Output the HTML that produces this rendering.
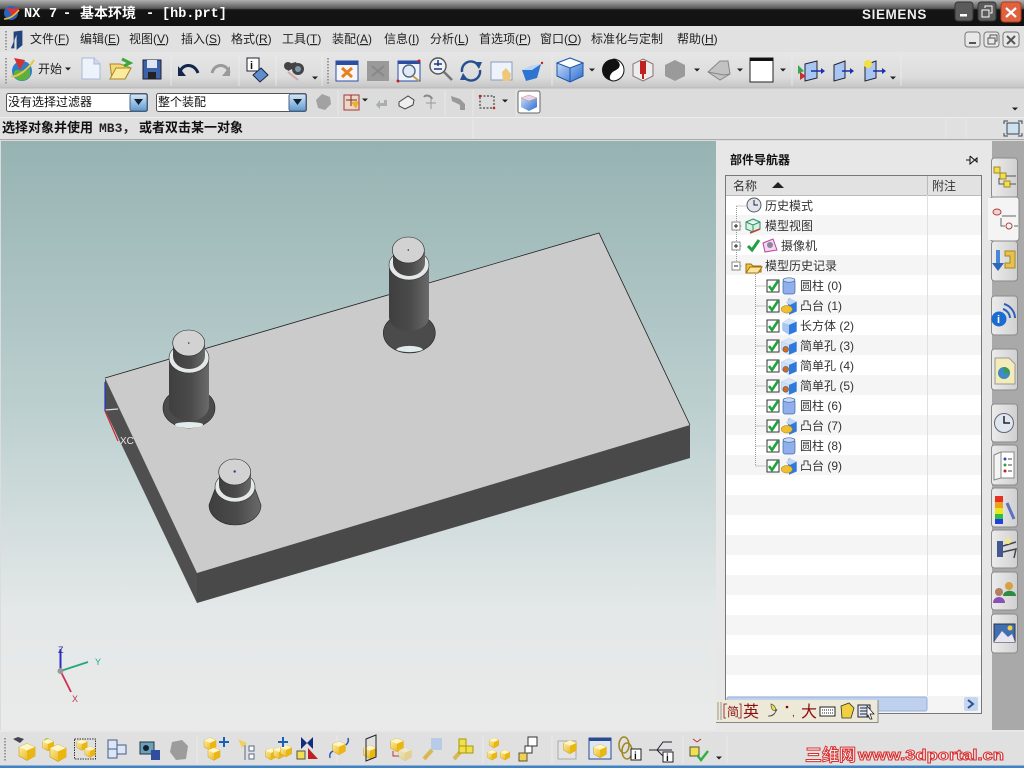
<!DOCTYPE html>
<html><head><meta charset="utf-8"><style>
html,body{margin:0;padding:0;width:1024px;height:768px;overflow:hidden;background:#ddd}
svg{display:block;filter:blur(.3px)}
text{font-family:"Liberation Sans","Noto Sans CJK SC",sans-serif;font-size:12px;fill:#222}
.t{font-size:12px;fill:#333}
.b{font-family:"Liberation Mono","Noto Sans CJK SC",monospace;font-weight:bold;font-size:13.5px;fill:#fff}
.s{font-family:"Liberation Mono","Noto Sans CJK SC",monospace;font-weight:bold;font-size:13px;fill:#111}
.tree{stroke:#999;stroke-dasharray:1 1;fill:none}
.sep{stroke:#eeeeee;stroke-opacity:.75}
.wm{font-weight:bold;fill:#fff;stroke:#d83030;stroke-width:1}
</style></head><body>
<svg width="1024" height="768" viewBox="0 0 1024 768" xmlns="http://www.w3.org/2000/svg">
<defs>
<linearGradient id="tb" x1="0" y1="0" x2="0" y2="1"><stop offset="0" stop-color="#b0b0b0"/><stop offset=".32" stop-color="#5a5a5a"/><stop offset=".38" stop-color="#151515"/><stop offset="1" stop-color="#111"/></linearGradient>
<linearGradient id="vp" x1="0" y1="0" x2="0" y2="1"><stop offset="0" stop-color="#96b3b2"/><stop offset=".45" stop-color="#bccfcf"/><stop offset=".8" stop-color="#e4e8e8"/><stop offset="1" stop-color="#eaeaea"/></linearGradient>
<linearGradient id="bar" x1="0" y1="0" x2="0" y2="1"><stop offset="0" stop-color="#e6e6e6"/><stop offset=".7" stop-color="#dcdcdc"/><stop offset="1" stop-color="#c4c4c4"/></linearGradient>
<linearGradient id="cyl" x1="0" y1="0" x2="1" y2="0"><stop offset="0" stop-color="#3f3f3f"/><stop offset=".55" stop-color="#4b4b4b"/><stop offset="1" stop-color="#6a6a6a"/></linearGradient>
<linearGradient id="bl" x1="0" y1="0" x2="1" y2="1"><stop offset="0" stop-color="#d5e6fb"/><stop offset="1" stop-color="#2a6bd0"/></linearGradient>
<linearGradient id="yl" x1="0" y1="0" x2="1" y2="1"><stop offset="0" stop-color="#fff4b0"/><stop offset="1" stop-color="#e3a800"/></linearGradient>
<linearGradient id="combo" x1="0" y1="0" x2="0" y2="1"><stop offset="0" stop-color="#dbe8f6"/><stop offset="1" stop-color="#5e9ad2"/></linearGradient>
<linearGradient id="tab" x1="0" y1="0" x2="1" y2="0"><stop offset="0" stop-color="#ececec"/><stop offset="1" stop-color="#d0d0d0"/></linearGradient>

<g id="yc"><path d="M0-8.500 8-5V4L0 8.500-8 4V-5Z" fill="url(#yl)" stroke="#c79a20" stroke-width=".6"/><path d="M-8-5 0-1.500 8-5 0-8.500Z" fill="#fff6c8"/><path d="M0-1.500V8.500L8 4V-5Z" fill="#eab60f"/></g>
<g id="bc"><path d="M0-12 13-7V6L0 12-13 6V-7Z" fill="url(#bl)" stroke="#1d56a8"/><path d="M-13-7 0-2 13-7 0-12Z" fill="#fff" stroke="#1d56a8"/><path d="M0-2V12" stroke="#1d56a8" fill="none"/></g>
<g id="chk"><rect x="-6" y="-6" width="12" height="12" fill="#fff" stroke="#333"/><path d="M-4 0-1 4 5-5" fill="none" stroke="#1ea43c" stroke-width="2.6"/></g>
<g id="cy"><rect x="-6" y="-6" width="12" height="14" rx="2" fill="#8fb0ea" stroke="#3d66a8" stroke-width=".7"/><ellipse cy="-6" rx="6" ry="2.2" fill="#c9daf6" stroke="#3d66a8" stroke-width=".7"/></g>
<g id="boss" transform="scale(1.100)"><path d="M0-7 7-4V5L0 8V0L-2-3Z" fill="#2f78dc"/><path d="M-3-3 1-7 7-4 1-1Z" fill="#bfd6f6"/><ellipse cx="-2" cy="3" rx="5" ry="3.4" fill="#f0c030" stroke="#b48a10" stroke-width=".5"/></g>
<g id="blk" transform="scale(1.100)"><path d="M0-7 7-4V5L0 8-6 4V-3Z" fill="#2f78dc"/><path d="M-6-3 0-7 7-4 0-1Z" fill="#d6e4f8"/><path d="M-6-3 0-1V8L-6 4Z" fill="#a8c6f0"/></g>
<g id="hole" transform="scale(1.100)"><path d="M0-7 7-4V5L0 8-7 4V-4Z" fill="#2f78dc"/><path d="M-7-4 0-7 7-4 0-1Z" fill="#d6e4f8"/><path d="M-7-4 0-1V8L-7 4Z" fill="#cfdff6"/><circle cx="-3" cy="3" r="2.6" fill="#d06a20" stroke="#555" stroke-width=".5"/></g>
<path id="dd" d="M-3-1.500H3L0 1.500Z" fill="#222"/>
</defs>

<!-- base -->
<rect width="1024" height="768" fill="#dcdcdc"/>
<!-- title -->
<rect width="1024" height="26" fill="url(#tb)"/>
<circle cx="11" cy="13" r="7" fill="#2a64b8"/><path d="M3 7C8 8 12 13 12 19 15 13 17 11 20 8 14 9 10 9 3 7Z" fill="#e03030"/><path d="M4 19C9 19 14 16 19 10" stroke="#e8c040" stroke-width="1.600" fill="none"/>
<text class="b" x="24" y="17">NX</text><text class="b" x="49" y="17">7</text><text class="b" x="63" y="17">-</text>
<text class="b" x="80" y="18" style="font-size:14px">基本环境</text><text class="b" x="146" y="17">-</text><text class="b" x="162" y="17">[hb.prt]</text>
<text x="862" y="19" style="font-size:13.500px;font-weight:bold;fill:#eee;letter-spacing:.6px">SIEMENS</text>
<rect x="955" y="2" width="18" height="19" rx="3" fill="#5b5b5b" stroke="#333"/><rect x="960" y="14" width="7" height="2.500" fill="#fff"/>
<rect x="978" y="2" width="18" height="19" rx="3" fill="#5b5b5b" stroke="#333"/><rect x="982" y="10" width="7" height="7" fill="none" stroke="#fff"/><path d="M985 8V6H992V13H990" fill="none" stroke="#fff"/>
<rect x="1001" y="2" width="20" height="20" rx="3" fill="#e0613f" stroke="#b03a20"/><path d="M1006 8 1016 17M1016 8 1006 17" stroke="#fff" stroke-width="2.200"/>

<!-- menubar -->
<rect y="26" width="1024" height="26" fill="#e1e1e1"/>
<path d="M6 31V50" stroke="#999" stroke-width="2" stroke-dasharray="1.500 1.500"/>
<path d="M11 48H14V32L22 31V45L17 49V34" fill="#23447c" stroke="#23447c" stroke-width=".8"/>
<text x="30" y="43">文件(<tspan text-decoration="underline">F</tspan>)</text><text x="80" y="43">编辑(<tspan text-decoration="underline">E</tspan>)</text><text x="129" y="43">视图(<tspan text-decoration="underline">V</tspan>)</text><text x="181" y="43">插入(<tspan text-decoration="underline">S</tspan>)</text><text x="231" y="43">格式(<tspan text-decoration="underline">R</tspan>)</text><text x="282" y="43">工具(<tspan text-decoration="underline">T</tspan>)</text><text x="332" y="43">装配(<tspan text-decoration="underline">A</tspan>)</text><text x="384" y="43">信息(<tspan text-decoration="underline">I</tspan>)</text><text x="430" y="43">分析(<tspan text-decoration="underline">L</tspan>)</text><text x="479" y="43">首选项(<tspan text-decoration="underline">P</tspan>)</text><text x="540" y="43">窗口(<tspan text-decoration="underline">O</tspan>)</text><text x="591" y="43">标准化与定制</text><text x="677" y="43">帮助(<tspan text-decoration="underline">H</tspan>)</text>
<g fill="#e8e8e8" stroke="#777"><rect x="965" y="32" width="15" height="15" rx="3"/><rect x="984" y="32" width="15" height="15" rx="3"/><rect x="1003" y="32" width="16" height="15" rx="3"/></g>
<rect x="969" y="42" width="7" height="2" fill="#555"/><rect x="988" y="38" width="7" height="6" fill="none" stroke="#555"/><path d="M990 38V35H997V41H995" fill="none" stroke="#555"/><path d="M1007 36 1015 44M1015 36 1007 44" stroke="#555" stroke-width="2"/>

<!-- toolbar row 1 -->
<rect y="52" width="1024" height="36" fill="url(#bar)"/>
<path d="M6 58V84M328 58V84" stroke="#999" stroke-width="2" stroke-dasharray="1.500 1.500"/>
<path class="sep" d="M171 56V86M239 56V86M276 56V86M322 54V86M552 54V86M792 54V86M901 54V86"/>
<circle cx="22" cy="71" r="10" fill="#2d7cc8"/><path d="M14 72C18 66 24 76 30 68V76C26 82 18 82 14 76Z" fill="#5bb040"/><path d="M14 58 25 60 20 70Z" fill="#d83030"/><path d="M11 76C16 78 28 70 34 60" stroke="#e8c83a" stroke-width="2" fill="none"/>
<text x="38" y="73">开始</text><use href="#dd" x="68" y="69"/>
<path d="M82 58H94L100 64V79H82Z" fill="#eef2fb" stroke="#a9b8d8"/><path d="M94 58V64H100" fill="#cfdaf0" stroke="#a9b8d8"/>
<path d="M110 64H120L131 68 125 79H112Z" fill="#f3d878" stroke="#a98a20"/><path d="M110 79 116 68H131L125 79Z" fill="#fbeb9f" stroke="#a98a20"/><path d="M122 59 130 63 124 66" fill="none" stroke="#3aa83a" stroke-width="3"/>
<rect x="143" y="60" width="18" height="19" fill="#3c62a8" stroke="#223"/><rect x="147" y="60" width="10" height="8" fill="#dfe6f4"/><rect x="148" y="72" width="8" height="7" fill="#222"/>
<path d="M180 73C181 64 194 62 198 73" fill="none" stroke="#12264e" stroke-width="3"/><path d="M178 66V76H186Z" fill="#12264e"/>
<path d="M229 73C228 64 215 62 212 73" fill="none" stroke="#9a9a9a" stroke-width="3"/><path d="M230 66V76H222Z" fill="#9a9a9a"/>
<rect x="247" y="58" width="12" height="13" fill="#fff" stroke="#223"/><text x="250" y="69" style="font-size:11px;font-weight:bold;fill:#111">i</text><path d="M261 68 268 75 260 82 253 75Z" fill="#5d8ed0" stroke="#223"/>
<g fill="#444"><path d="M285 65 296 62 298 66 288 71Z"/><circle cx="298" cy="69" r="6"/><circle cx="288" cy="66" r="4"/></g><circle cx="298" cy="69" r="3" fill="#7e97b0"/><path d="M288 72 298 80" stroke="#caa" stroke-width="2"/><use href="#dd" x="315" y="78"/>
<rect x="336" y="61" width="22" height="20" fill="#f6f6fa" stroke="#2b4ea0"/><rect x="336" y="61" width="22" height="4" fill="#2b4ea0"/><path d="M342 68 352 77M352 68 342 77" stroke="#e8801c" stroke-width="3"/>
<rect x="367" y="61" width="22" height="20" fill="#9a9a9a"/><path d="M372 66 384 76M384 66 372 76" stroke="#888" stroke-width="2"/>
<rect x="398" y="61" width="22" height="20" fill="#eef2fa" stroke="#2b4ea0"/><rect x="398" y="61" width="22" height="3" fill="#2b4ea0"/><circle cx="409" cy="71" r="6" fill="#dfeaf6" stroke="#50657e" stroke-width="1.400"/><path d="M413 76 419 81" stroke="#c8a040" stroke-width="2"/><circle cx="398" cy="81" r="1.500" fill="#c02020"/><circle cx="419" cy="61" r="1.500" fill="#c02020"/>
<circle cx="438" cy="66" r="8" fill="#eef2f6" stroke="#555" stroke-width="1.400"/><path d="M434 64H442M438 60V66M434 69H442" stroke="#1c3a7c" stroke-width="1.500"/><path d="M444 72 452 80" stroke="#777" stroke-width="2.600"/>
<path d="M462 72A9 9 0 0 1 478 65" fill="none" stroke="#27508f" stroke-width="2.400"/><path d="M480 70A9 9 0 0 1 464 77" fill="none" stroke="#27508f" stroke-width="2.400"/><path d="M474 62 482 62 479 69Z M468 80 460 80 463 73Z" fill="#27508f"/>
<rect x="491" y="62" width="21" height="18" fill="#eef2fa" stroke="#8a9bc0"/><path d="M502 72 506 68 511 74 510 81H503Z" fill="#eec878"/>
<path d="M522 70 541 64 537 78 526 81Z" fill="#2d75d0"/><path d="M522 70 530 66 541 64 532 70Z" fill="#b9d4f4"/><circle cx="542" cy="63" r="1.200" fill="#c02020"/>
<use href="#bc" x="570" y="70"/><use href="#dd" x="592" y="70"/>
<circle cx="613" cy="70" r="11" fill="#111"/><path d="M613 59A11 11 0 0 1 613 81C606 80 610 72 615 70 621 67 621 62 613 59Z" fill="#fff" stroke="#111"/>
<path d="M643 59 653 64V76L643 81 633 76V64Z" fill="#ececec" stroke="#8a7070"/><rect x="640" y="61" width="6" height="13" fill="#c02020"/><path d="M643 74V79" stroke="#c02020" stroke-width="2"/>
<path d="M675 60 685 65V76L675 81 665 76V65Z" fill="#9a9a9a"/><use href="#dd" x="697" y="70"/>
<path d="M708 72 720 61H728L730 74 720 80Z" fill="#c2c2c2" stroke="#888"/><path d="M708 72 724 75 730 74" fill="none" stroke="#888"/><use href="#dd" x="740" y="70"/>
<rect x="750" y="58" width="23" height="24" fill="#fff" stroke="#222"/><rect x="750" y="58" width="23" height="3" fill="#111"/><use href="#dd" x="783" y="70"/>
<path d="M805 64 817 61V78L805 81Z" fill="#a9c6f2" stroke="#223"/><path d="M798 65 804 71 798 74Z" fill="#38a850"/><path d="M800 72 806 76 800 80Z" fill="#c83030"/><path d="M811 71H821" stroke="#1830b0" stroke-width="1.500"/><path d="M821 68 825 71 821 74Z" fill="#1830b0"/>
<path d="M834 65 845 61V78L834 81Z" fill="#a9c6f2" stroke="#223"/><path d="M842 71H850" stroke="#1830b0" stroke-width="1.500"/><path d="M850 68 854 71 850 74Z" fill="#1830b0"/>
<path d="M865 65 876 61V78L865 81Z" fill="#a9c6f2" stroke="#223"/><path d="M873 71H882" stroke="#1830b0" stroke-width="1.500"/><path d="M882 68 886 71 882 74Z" fill="#1830b0"/><circle cx="868" cy="64" r="4" fill="#f0e040"/><use href="#dd" x="893" y="78"/>

<!-- toolbar row 2 -->
<rect y="88" width="1024" height="30" fill="#dcdcdc"/><path d="M0 88H1024" stroke="#bbb"/>
<path d="M0 117.500H1024" stroke="#eee"/>
<rect x="6.500" y="93.500" width="141" height="18" rx="2" fill="#fff" stroke="#555"/><rect x="130" y="94" width="17" height="17" rx="2" fill="url(#combo)" stroke="#48648a"/><path d="M134 99H143L138.500 105Z" fill="#123"/>
<text x="8" y="106" style="font-size:12px;fill:#111">没有选择过滤器</text>
<rect x="156.500" y="93.500" width="150" height="18" rx="2" fill="#fff" stroke="#555"/><rect x="289" y="94" width="17" height="17" rx="2" fill="url(#combo)" stroke="#48648a"/><path d="M293 99H302L297.500 105Z" fill="#123"/>
<text x="158" y="106" style="font-size:12px;fill:#111">整个装配</text>
<path d="M316 100 322 94 330 97 331 104 325 110 318 108Z" fill="#a2a2a2"/>
<path class="sep" d="M338 90V116M445 90V116M473 90V116M516 90V116"/>
<rect x="344" y="95" width="15" height="15" fill="#e8d8c8" stroke="#a33"/><path d="M351 95V106M346 100H357" stroke="#822"/><path d="M351 102 359 101 356 109Z" fill="#eab030"/><use href="#dd" x="365" y="100"/>
<path d="M376 105 380 109V106H387V100H384V103H380V100Z" fill="#a8b0a8"/>
<path d="M399 102 408 96 414 100 413 105 405 109 399 106Z" fill="#eee" stroke="#444"/>
<path d="M424 97C426 94 431 96 432 99" fill="none" stroke="#888" stroke-width="2"/><path d="M431 99V109M426 103H436" stroke="#999"/>
<path d="M451 96 460 99 465 104V110H460V105L452 101Z" fill="#999"/>
<rect x="480" y="96" width="14" height="12" fill="none" stroke="#222" stroke-dasharray="2 1.500"/><circle cx="480" cy="96" r="1.300" fill="#c22"/><circle cx="494" cy="108" r="1.300" fill="#c22"/><use href="#dd" x="505" y="101"/>
<rect x="518" y="91" width="22" height="22" rx="2" fill="#fff" stroke="#666"/><path d="M529 95 537 98V107L529 111 521 107V98Z" fill="url(#bl)"/><path d="M521 98 529 101 537 98 529 95Z" fill="#e4d8e8" stroke="#cc8888" stroke-width=".5"/>
<use href="#dd" x="1015" y="109"/>

<!-- status row -->
<rect y="118" width="1024" height="22" fill="#e0e0e0"/><path d="M0 139.500H1024" stroke="#aaa"/>
<path class="sep" d="M473 119V138M946 119V138M966 119V138"/>
<text class="s" x="2" y="132">选择对象并使用</text><text class="s" x="99" y="132" style="fill:#222">MB3，</text><text class="s" x="139" y="132">或者双击某一对象</text>
<rect x="1007" y="123" width="12" height="11" fill="#cfe0ef" stroke="#345"/><path d="M1004 124V121H1008M1018 121H1022V124M1022 133V136H1018M1008 136H1004V133" fill="none" stroke="#345"/>

<!-- viewport -->
<rect x="1" y="141" width="715" height="589" fill="url(#vp)"/>
<path d="M105 378 599 233 690 425 197 573Z" fill="#cbcbcb"/>
<path d="M105 378 197 573V603L105 410Z" fill="#4f4f4f"/>
<path d="M197 573 690 425V458L197 603Z" fill="#494949"/>
<path d="M105 378 599 233 690 425" fill="none" stroke="#222" stroke-width=".8"/>
<path d="M105 410 118 409" stroke="#ddd" stroke-width="1.200"/>
<path d="M105 382V411" stroke="#2233cc" stroke-width="1.200"/><path d="M105 411 118 441" stroke="#d02030" stroke-width="1.200"/>
<text x="120" y="444" style="font-size:10px;fill:#e8e8e8">XC</text>

<!-- peg A -->
<ellipse cx="189" cy="408" rx="26" ry="20" fill="#4b4b4b" stroke="#222" stroke-width=".6"/>
<path d="M175 424.500A14 2.500 0 0 1 203 424.500A14 3.500 0 0 1 175 424.500Z" fill="#e3ecec"/>
<path d="M169 360V406A20 15 0 0 0 209 406V360Z" fill="url(#cyl)"/>
<ellipse cx="189" cy="358" rx="20" ry="15" fill="#e4e8e8" stroke="#333" stroke-width=".6"/>
<path d="M173 345V356A16 13 0 0 0 205 356V345Z" fill="url(#cyl)"/>
<ellipse cx="188.700" cy="343" rx="16" ry="13" fill="#d2d2d2" stroke="#222" stroke-width=".6"/>
<circle cx="188.700" cy="343" r=".8" fill="#333"/>
<!-- peg B -->
<ellipse cx="409.300" cy="333" rx="26" ry="20" fill="#4b4b4b" stroke="#222" stroke-width=".6"/>
<path d="M396 349.500A14 5 0 0 1 423 349.500A14 3.500 0 0 1 396 349.500Z" fill="#dfeaea"/>
<path d="M389 267V317A20 14 0 0 0 429 317V267Z" fill="url(#cyl)"/>
<ellipse cx="409" cy="265" rx="20" ry="15" fill="#e4e8e8" stroke="#333" stroke-width=".6"/>
<path d="M393 252V263A16 13 0 0 0 425 263V252Z" fill="url(#cyl)"/>
<ellipse cx="408.300" cy="250" rx="16" ry="13" fill="#d2d2d2" stroke="#222" stroke-width=".6"/>
<circle cx="408.300" cy="250" r=".8" fill="#333"/>
<!-- peg C -->
<path d="M215 489 209 505A26 20 0 0 0 261 505L255 489Z" fill="url(#cyl)" stroke="#222" stroke-width=".6"/>
<ellipse cx="235" cy="487" rx="20" ry="15" fill="#e4e8e8" stroke="#333" stroke-width=".6"/>
<path d="M219 474V485A16 13 0 0 0 251 485V474Z" fill="url(#cyl)"/>
<ellipse cx="234.700" cy="472" rx="16" ry="13" fill="#d2d2d2" stroke="#222" stroke-width=".6"/>
<circle cx="234.700" cy="471.500" r="1.200" fill="#3a3a8a"/>

<!-- triad -->
<path d="M60.500 671V649" stroke="#3030c0" stroke-width="2"/><path d="M60.500 671 88 662" stroke="#20a878" stroke-width="1.800"/><path d="M60.500 671 71 692" stroke="#d03050" stroke-width="1.800"/><circle cx="60.500" cy="671" r="3" fill="#999"/>
<text x="58" y="653" style="font-size:9px;fill:#3030a0">Z</text><text x="95" y="665" style="font-size:9px;fill:#20a878">Y</text><text x="72" y="702" style="font-size:9px;fill:#c03050">X</text>

<!-- nav panel -->
<rect x="716" y="141" width="276" height="590" fill="#e7e7e7"/>
<text x="730" y="164" style="font-weight:bold;font-size:12px;fill:#111">部件导航器</text>
<path d="M966 160H970M970 156V164L977 158V162L970 156" fill="none" stroke="#111"/>
<rect x="725.500" y="175.500" width="256" height="538" fill="#fff" stroke="#777"/>
<rect x="726" y="176" width="255" height="19" fill="#e2e2e2"/>
<path d="M726 195.500H981M927.500 176V195" stroke="#bbb"/>
<text class="t" x="733" y="190">名称</text><path d="M772 188H784L778 182Z" fill="#222"/><text class="t" x="932" y="190">附注</text>
<g fill="#f5f5f5"><rect x="726" y="215" width="255" height="20"/><rect x="726" y="255" width="255" height="20"/><rect x="726" y="295" width="255" height="20"/><rect x="726" y="335" width="255" height="20"/><rect x="726" y="375" width="255" height="20"/><rect x="726" y="415" width="255" height="20"/><rect x="726" y="455" width="255" height="20"/><rect x="726" y="495" width="255" height="20"/><rect x="726" y="535" width="255" height="20"/><rect x="726" y="575" width="255" height="20"/><rect x="726" y="615" width="255" height="20"/><rect x="726" y="655" width="255" height="20"/></g>
<path d="M927.500 195V696" stroke="#e0e0e0"/>
<path class="tree" d="M736.500 206V262M736.500 206H746M736.500 226H742M736.500 246H742M736.500 266H742M755.500 274V466M755.500 286H766M755.500 306H766M755.500 326H766M755.500 346H766M755.500 366H766M755.500 386H766M755.500 406H766M755.500 426H766M755.500 446H766M755.500 466H766"/>
<!-- tree icons row 1-4 -->
<circle cx="754" cy="205" r="7" fill="#e2e6ec" stroke="#556"/><path d="M754 200V205H758" stroke="#223" fill="none"/>
<g fill="#fff" stroke="#888"><rect x="732" y="222" width="8" height="8"/><rect x="732" y="242" width="8" height="8"/><rect x="732" y="262" width="8" height="8"/></g>
<path d="M734 226H738M736 224V228M734 246H738M736 244V248M734 266H738" stroke="#222"/>
<path d="M753 219 760 222V229L753 232 746 229V222Z M746 222 753 225 760 222M753 225V232" fill="#d8f0e0" stroke="#2a9070"/><path d="M750 233 760 229" stroke="#c04030" stroke-width="1.500"/>
<path d="M748 246 752 250 759 240" fill="none" stroke="#20a040" stroke-width="3"/>
<path d="M763 243 773 239 777 250 765 252Z" fill="#f0d8f0" stroke="#c040a0"/><circle cx="770" cy="245" r="3" fill="#889"/>
<path d="M746 264H751L753 266H761V272H746Z" fill="#f0c040" stroke="#a07010"/><path d="M746 273 750 267H762L758 273Z" fill="#fbe69a" stroke="#a07010"/>
<text class="t" x="765" y="210">历史模式</text><text class="t" x="765" y="230">模型视图</text><text class="t" x="781" y="250">摄像机</text><text class="t" x="765" y="270">模型历史记录</text>
<text class="t" x="800" y="290">圆柱 (0)</text><text class="t" x="800" y="310">凸台 (1)</text><text class="t" x="800" y="330">长方体 (2)</text><text class="t" x="800" y="350">简单孔 (3)</text><text class="t" x="800" y="370">简单孔 (4)</text><text class="t" x="800" y="390">简单孔 (5)</text><text class="t" x="800" y="410">圆柱 (6)</text><text class="t" x="800" y="430">凸台 (7)</text><text class="t" x="800" y="450">圆柱 (8)</text><text class="t" x="800" y="470">凸台 (9)</text>
<use href="#chk" x="773" y="286"/><use href="#chk" x="773" y="306"/><use href="#chk" x="773" y="326"/><use href="#chk" x="773" y="346"/><use href="#chk" x="773" y="366"/><use href="#chk" x="773" y="386"/><use href="#chk" x="773" y="406"/><use href="#chk" x="773" y="426"/><use href="#chk" x="773" y="446"/><use href="#chk" x="773" y="466"/>
<use href="#cy" x="789" y="286"/><use href="#boss" x="789" y="306"/><use href="#blk" x="789" y="326"/><use href="#hole" x="789" y="346"/><use href="#hole" x="789" y="366"/><use href="#hole" x="789" y="386"/><use href="#cy" x="789" y="406"/><use href="#boss" x="789" y="426"/><use href="#cy" x="789" y="446"/><use href="#boss" x="789" y="466"/>
<!-- scrollbar -->
<rect x="726" y="696" width="255" height="17" fill="#f4f4f4"/>
<rect x="727" y="697" width="200" height="14" rx="2" fill="#bdd0ee" stroke="#98aed4"/>
<rect x="964" y="697" width="14" height="14" rx="2" fill="#c5d6f0"/><path d="M968 700 973 704 968 708" fill="none" stroke="#2e4f90" stroke-width="2"/>

<!-- right tabs -->
<rect x="992" y="141" width="32" height="590" fill="#a9a9a9"/>
<g fill="url(#tab)" stroke="#8a8a8a"><rect x="991.500" y="158" width="26" height="40" rx="3"/><rect x="991.500" y="241" width="26" height="40" rx="3"/><rect x="991.500" y="296" width="26" height="39" rx="3"/><rect x="991.500" y="349" width="26" height="41" rx="3"/><rect x="991.500" y="404" width="26" height="38" rx="3"/><rect x="991.500" y="445" width="26" height="40" rx="3"/><rect x="991.500" y="488" width="26" height="39" rx="3"/><rect x="991.500" y="530" width="26" height="38" rx="3"/><rect x="991.500" y="572" width="26" height="38" rx="3"/><rect x="991.500" y="614" width="26" height="39" rx="3"/></g>
<rect x="990" y="197" width="29" height="44" rx="3" fill="#f4f4f4" stroke="#8a8a8a"/><rect x="988" y="198" width="4" height="42" fill="#f4f4f4"/>
<rect x="994" y="167" width="6" height="6" fill="#f0e050" stroke="#a08a20"/><rect x="1000" y="173" width="6" height="6" fill="#f0e050" stroke="#a08a20"/><rect x="1004" y="181" width="6" height="6" fill="#f0e050" stroke="#a08a20"/><path d="M999 178V184H1004M1006 176H1016M1010 184H1016" stroke="#555" fill="none"/>
<ellipse cx="997" cy="212" rx="4" ry="3" fill="#f0d0d0" stroke="#b04040"/><path d="M1002 216H1016M1001 218V226H1005M1014 226H1018" stroke="#666" fill="none"/><circle cx="1009" cy="226" r="3" fill="none" stroke="#b04040"/>
<path d="M996 250V264H1000V250Z" fill="#4a86d8"/><path d="M992 263 998 271 1004 263Z" fill="#2e66b8"/><path d="M1005 251H1015V268H1005V263H1010V256H1005Z" fill="#e8c050" stroke="#a08a20"/>
<circle cx="999" cy="319" r="7.500" fill="#1c6cd0"/><text x="997" y="323" style="font-size:11px;font-weight:bold;fill:#fff">i</text><path d="M1003 309A10 10 0 0 1 1010 318M1004 304A15 15 0 0 1 1015 318" fill="none" stroke="#2a62b8" stroke-width="2"/>
<path d="M995 358H1009L1015 364V384H995Z" fill="#f3ecb8" stroke="#999"/><circle cx="1004" cy="373" r="6" fill="#3f8ac0"/><path d="M1004 367A6 6 0 0 1 1010 373H1004Z" fill="#3b9a50"/>
<circle cx="1004" cy="423" r="9.500" fill="#dfe6ee" stroke="#667"/><path d="M1004 416V423H1010" stroke="#223" fill="none" stroke-width="1.500"/>
<path d="M994 455 1001 452V478L994 480Z" fill="#f4f4f4" stroke="#888"/><rect x="1001" y="452" width="13" height="26" fill="#fff" stroke="#888"/><circle cx="1005" cy="459" r="1.500" fill="#2a50a0"/><circle cx="1005" cy="465" r="1.500" fill="#30a040"/><circle cx="1005" cy="471" r="1.500" fill="#c02020"/><path d="M1008 459H1012M1008 465H1012M1008 471H1012" stroke="#444"/>
<rect x="995" y="496" width="8" height="6" fill="#e83020"/><rect x="995" y="502" width="8" height="6" fill="#f0a020"/><rect x="995" y="508" width="8" height="6" fill="#e8e820"/><rect x="995" y="514" width="8" height="5" fill="#30c040"/><rect x="995" y="519" width="8" height="5" fill="#2040e0"/><path d="M1007 503 1014 519" stroke="#6070c0" stroke-width="3"/>
<rect x="997" y="541" width="6" height="16" fill="#44578e"/><path d="M1003 546 1016 542M1003 552 1016 549 1014 558" stroke="#445" stroke-width="1.500" fill="none"/><circle cx="1008" cy="541" r="3" fill="#f0e880"/>
<circle cx="999" cy="592" r="4" fill="#b08060"/><path d="M993 603C993 595 1005 595 1005 603Z" fill="#8a50b8"/><circle cx="1009" cy="586" r="4" fill="#d8a040"/><path d="M1003 596C1003 589 1016 589 1016 596Z" fill="#2f8a40"/>
<rect x="994" y="624" width="21" height="18" fill="#3f6fb0" stroke="#334"/><path d="M994 642 1002 631 1008 637 1012 634 1015 642Z" fill="#e8e4f0"/><circle cx="1010" cy="628" r="2.500" fill="#f0d040"/>

<!-- bottom toolbar -->
<rect y="730" width="1024" height="36" fill="#e0e0e0"/><path d="M0 731H1024" stroke="#eee"/>
<rect y="765.500" width="1024" height="3" fill="#3f82c6"/>
<path d="M5 738V762" stroke="#999" stroke-width="2" stroke-dasharray="1.500 1.500"/>
<path class="sep" d="M197 735V763M337 735V763M483 735V763M552 735V763M683 735V763M727 735V763"/>
<path d="M13 739 20 743 24 739 18 737Z" fill="#445"/><use href="#yc" x="27" y="752"/>
<circle cx="47" cy="741" r="3" fill="#a8c860"/><g transform="translate(48 745) scale(.7)"><use href="#yc"/></g><use href="#yc" x="58" y="753"/>
<rect x="74.500" y="739" width="21" height="20" fill="none" stroke="#333" stroke-dasharray="1.500 1"/><g transform="translate(82 745) scale(.65)"><use href="#yc"/></g><g transform="translate(90 752) scale(.65)"><use href="#yc"/></g>
<g fill="#dde6f4" stroke="#445c8a"><rect x="108" y="740" width="9" height="9"/><rect x="117" y="745" width="9" height="9"/><rect x="108" y="749" width="9" height="9"/></g>
<rect x="140" y="742" width="14" height="12" fill="#6aa0b8" stroke="#234"/><circle cx="146" cy="748" r="3" fill="#123"/><rect x="151" y="750" width="9" height="10" fill="#2f4ea0"/>
<path d="M172 742 182 740 188 746 186 759 176 760 170 752Z" fill="#9c9c9c"/>
<g transform="translate(210 744) scale(.75)"><use href="#yc"/></g><g transform="translate(214 754) scale(.75)"><use href="#yc"/></g><path d="M224 737V747M219 742H229" stroke="#1c5fb8" stroke-width="2"/>
<path d="M238 739 247 743 242 748Z" fill="#f0d060"/><path d="M245 745V760" stroke="#5a6a8a"/><rect x="249" y="746" width="5" height="5" fill="#fff" stroke="#5a6a8a"/><rect x="249" y="754" width="5" height="5" fill="#fff" stroke="#5a6a8a"/>
<g transform="translate(271 754) scale(.7)"><use href="#yc"/></g><g transform="translate(279 753) scale(.7)"><use href="#yc"/></g><g transform="translate(286 751) scale(.7)"><use href="#yc"/></g><path d="M283 737V747M278 742H288" stroke="#1c5fb8" stroke-width="2"/>
<path d="M301 737 307 743 313 737V749L307 743 301 749Z" fill="#122a80"/><rect x="297" y="751" width="8" height="8" fill="#f0e050" stroke="#554"/><path d="M308 759 318 759 308 748Z" fill="#c02020"/>
<g transform="translate(339 748) scale(.8)"><use href="#yc"/></g><path d="M330 758C329 754 331 752 333 751M348 738C349 741 348 743 346 745" stroke="#2a55b8" stroke-width="1.500" fill="none"/>
<g transform="translate(370 752) scale(.8)"><use href="#yc"/></g><path d="M366 739 376 735V757L366 761Z" fill="none" stroke="#222"/>
<g transform="translate(397 745) scale(.8)"><use href="#yc"/></g><path d="M393 751V756H399" stroke="#c03030" fill="none"/><g transform="translate(405 754) scale(.8)" opacity=".4"><use href="#yc"/></g>
<path d="M424 759 432 750" stroke="#d8b850" stroke-width="4"/><rect x="431" y="738" width="11" height="12" fill="#b8cce8"/>
<path d="M454 759 462 750" stroke="#d8b850" stroke-width="4"/><rect x="459" y="739" width="7" height="7" fill="#f0e050" stroke="#a90"/><rect x="459" y="746" width="7" height="7" fill="#f0e050" stroke="#a90"/><rect x="466" y="746" width="7" height="7" fill="#f0e050" stroke="#a90"/>
<g transform="translate(494 743) scale(.6)"><use href="#yc"/></g><g transform="translate(492 755) scale(.6)"><use href="#yc"/></g><g transform="translate(505 755) scale(.6)"><use href="#yc"/></g>
<rect x="528" y="737" width="9" height="9" fill="#fff" stroke="#333"/><rect x="525" y="746" width="7" height="7" fill="#fff" stroke="#333"/><rect x="519" y="753" width="8" height="8" fill="#f0d050" stroke="#554"/>
<rect x="558" y="741" width="18" height="18" fill="#e4e4e4" stroke="#aaa"/><g transform="translate(570 747) scale(.8)"><use href="#yc"/></g>
<rect x="589" y="738" width="22" height="21" fill="#dde6f4" stroke="#2a4a90"/><rect x="589" y="738" width="22" height="3" fill="#2a4a90"/><g transform="translate(600 751) scale(.8)"><use href="#yc"/></g>
<ellipse cx="624" cy="745" rx="5" ry="8" fill="none" stroke="#a08820" stroke-width="1.500"/><ellipse cx="627" cy="751" rx="5" ry="8" fill="none" stroke="#a08820" stroke-width="1.500"/><rect x="631" y="749" width="10" height="11" fill="#fff" stroke="#222"/><text x="634" y="759" style="font-size:10px;font-weight:bold;fill:#111">i</text>
<path d="M649 750H657L663 742H672M657 750H672M657 750 663 756" fill="none" stroke="#223"/><rect x="663" y="752" width="10" height="10" fill="#fff" stroke="#222"/><text x="666" y="761" style="font-size:10px;font-weight:bold;fill:#111">i</text>
<rect x="690" y="747" width="9" height="9" fill="#f0e050" stroke="#554"/><path d="M693 739 697 742M701 739 697 742" stroke="#c03030"/><path d="M697 755 701 760 708 751" fill="none" stroke="#30b040" stroke-width="2.400"/><use href="#dd" x="719" y="758"/>

<text class="wm" x="805" y="761" style="font-size:17px">三维网</text>
<text class="wm" x="858" y="760" textLength="146" lengthAdjust="spacingAndGlyphs" style="font-size:15px">www.3dportal.cn</text>

<!-- IME bar -->
<rect x="716" y="700" width="162" height="22" fill="#ece9d8"/><path d="M716 722.500H878V700" stroke="#888" fill="none"/>
<path d="M718 702V720M721 702V720" stroke="#999"/>
<path d="M726 718H724V704H727M739 704H741V718H738" fill="none" stroke="#8a1010" stroke-width=".8"/>
<text x="727" y="716" style="font-size:12px;fill:#8a1010">简</text>
<text x="743" y="717" style="font-size:16px;fill:#8a1010">英</text>
<path d="M771 704A6 6 0 0 1 768 716C772 716 776 713 777 709 775 712 771 711 771 704Z" fill="#f0e040" stroke="#555" stroke-width=".7"/>
<circle cx="787" cy="707" r="1.300" fill="#800"/><text x="792" y="716" style="font-size:10px;fill:#800">,</text>
<text x="801" y="717" style="font-size:16px;fill:#8a1010">大</text>
<rect x="820" y="707" width="15" height="9" fill="#fff" stroke="#222"/><path d="M822 710H833M822 713H833" stroke="#222" stroke-dasharray="1 1"/>
<path d="M841 706 849 703 854 708 851 718 842 718Z" fill="#f0d040" stroke="#333" stroke-width=".8"/>
<rect x="858" y="705" width="12" height="12" fill="#dfe6f4" stroke="#223"/><path d="M860 708H868M860 711H868M860 714H868" stroke="#223"/><path d="M867 706 874 714 870 714 872 719 870 719 868 715 867 717Z" fill="#fff" stroke="#111" stroke-width=".7"/>
</svg>
</body></html>
